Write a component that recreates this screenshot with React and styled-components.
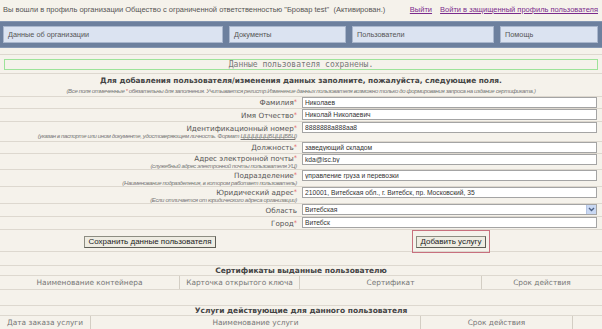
import React from 'react';
import styled, { createGlobalStyle } from 'styled-components';

const GlobalStyle = createGlobalStyle`
	body {
		margin: 0;
		background: #f5f2eb;
		font-family: "DejaVu Sans", Verdana, sans-serif;
	}
`;

const fields = [
	{ label: 'Фамилия', value: 'Николаев', h: 11 },
	{ label: 'Имя Отчество', value: 'Николай Николаевич', h: 12 },
	{
		label: 'Идентификационный номер',
		note: (
			<>
				(указан в паспорте или ином документе, удостоверяющем личность. Формат <u>ЦЦЦЦЦЦЦБЦЦЦББЦ</u>)
			</>
		),
		value: '8888888a888aa8',
		h: 19,
	},
	{ label: 'Должность', value: 'заведующий складом', h: 11 },
	{
		label: 'Адрес электронной почты',
		note: '(служебный адрес электронной почты пользователя УЦ)',
		value: 'kda@isc.by',
		h: 15,
	},
	{
		label: 'Подразделение',
		note: '(Наименование подразделения, в котором работает пользователь)',
		value: 'управление груза и перевозки',
		h: 16,
	},
	{
		label: 'Юридический адрес',
		note: '(Если отличается от юридического адреса организации)',
		value: '210001, Витебская обл., г. Витебск, пр. Московский, 35',
		h: 16,
	},
	{ label: 'Область', value: 'Витебская', select: true, plain: true, h: 12 },
	{ label: 'Город', value: 'Витебск', h: 12 },
];

export default function App() {
	return (
		<Page>
			<GlobalStyle />
			<TopBar>
				<Info>
					Вы вошли в профиль организации Общество с ограниченной ответственностью "Бровар test"&nbsp;&nbsp;(Активирован.)
				</Info>
				<Links>
					<a href="#">Выйти</a>
					<a href="#">Войти в защищенный профиль пользователя</a>
				</Links>
			</TopBar>
			<Nav>
				<Tab $w={220}>Данные об организации</Tab>
				<Tab $w={117}>Документы</Tab>
				<Tab $w={142}>Пользователи</Tab>
				<Tab $w={98}>Помощь</Tab>
			</Nav>
			<Gap />
			<MessageRow>
				<Message>Данные пользователя сохранены.</Message>
			</MessageRow>
			<Intro>
				<Heading>Для добавления пользователя/изменения данных заполните, пожалуйста, следующие поля.</Heading>
				<Note>
					(Все поля отмеченные <Star>*</Star> обязательны для заполнения. Учитывается регистр.Изменение данных
					пользователя возможно только до формирования запроса на издание сертификата.)
				</Note>
			</Intro>
			{fields.map((f) => (
				<FormRow key={f.label} $h={f.h}>
					<LabelCell>
						<Label>
							{f.label}
							{!f.plain && <Star>*</Star>}
						</Label>
						{f.note && <Note $right>{f.note}</Note>}
					</LabelCell>
					<FieldCell>
						{f.select ? (
							<SelectBox>
								<span>{f.value}</span>
								<Arrow>
									<svg width="7" height="5" viewBox="0 0 7 5">
										<path d="M1 1 L3.5 3.5 L6 1" stroke="#4d6185" strokeWidth="1.4" fill="none" />
									</svg>
								</Arrow>
							</SelectBox>
						) : (
							<Input readOnly value={f.value} />
						)}
					</FieldCell>
				</FormRow>
			))}
			<ButtonRow>
				<ButtonCell>
					<Button>Сохранить данные пользователя</Button>
				</ButtonCell>
				<ButtonCell>
					<Marked>
						<Button>Добавить услугу</Button>
					</Marked>
				</ButtonCell>
			</ButtonRow>
			<EmptyRow $h={13} />
			<SectionTitle>Сертификаты выданные пользователю</SectionTitle>
			<HeaderRow $cols="180px 120px 182px 1fr">
				<HeadCell>Наименование контейнера</HeadCell>
				<HeadCell>Карточка открытого ключа</HeadCell>
				<HeadCell>Сертификат</HeadCell>
				<HeadCell $last>Срок действия</HeadCell>
			</HeaderRow>
			<EmptyRow $h={15} />
			<SectionTitle>Услуги действующие для данного пользователя</SectionTitle>
			<HeaderRow $cols="91px 330px 152px 1fr">
				<HeadCell>Дата заказа услуги</HeadCell>
				<HeadCell>Наименование услуги</HeadCell>
				<HeadCell>Срок действия</HeadCell>
				<HeadCell $last />
			</HeaderRow>
			<BottomBar />
		</Page>
	);
}

const Page = styled.div`
	width: 602px;
	overflow: hidden;
`;

const TopBar = styled.div`
	height: 21px;
	display: flex;
	align-items: center;
	justify-content: space-between;
	padding: 0 4px 3px 3px;
	box-sizing: border-box;
	font-family: "Liberation Sans", Arial, sans-serif;
	font-size: 7.5px;
`;

const Info = styled.span`
	color: #555;
	white-space: nowrap;
`;

const Links = styled.div`
	display: flex;
	gap: 8px;
	white-space: nowrap;

	a {
		color: #7b2b8c;
		text-decoration: underline;
	}
`;

const Nav = styled.div`
	height: 27px;
	box-sizing: border-box;
	background: #6d809e;
	border-top: 1px solid #8496b2;
	border-bottom: 1px solid #8496b2;
	padding: 4px 3px;
	display: flex;
	gap: 6px;
`;

const Tab = styled.div`
	width: ${(p) => p.$w}px;
	box-sizing: border-box;
	background: #dbe3f1;
	border: 1px solid #aab7cd;
	display: flex;
	align-items: center;
	padding-left: 4px;
	font-family: "Liberation Sans", Arial, sans-serif;
	font-size: 7.3px;
	color: #555;
`;

const Gap = styled.div`
	height: 6px;
	border-bottom: 1px solid #ddd8cf;
`;

const MessageRow = styled.div`
	padding: 4px 4px 3px;
	border-bottom: 1px solid #ddd8cf;
`;

const Message = styled.div`
	height: 11px;
	box-sizing: border-box;
	border: 1px solid #9ee39a;
	font-family: "DejaVu Sans Mono", monospace;
	font-size: 8px;
	line-height: 9px;
	color: #777;
	text-align: center;
`;

const Intro = styled.div`
	padding: 1px 0;
	text-align: center;
	border-bottom: 1px solid #ddd8cf;
`;

const Heading = styled.div`
	font-weight: bold;
	font-size: 7.4px;
	line-height: 12px;
	color: #444;
`;

const Note = styled.div`
	font-family: "Liberation Sans", Arial, sans-serif;
	font-style: italic;
	font-size: 6px;
	letter-spacing: -0.35px;
	line-height: ${(p) => (p.$right ? '6px' : '8px')};
	color: #777;
	white-space: nowrap;
`;

const Star = styled.span`
	color: #e25b5b;
	font-size: 0.9em;
	vertical-align: top;
`;

const FormRow = styled.div`
	display: grid;
	grid-template-columns: 300px 1fr;
	height: ${(p) => p.$h}px;
	border-bottom: 1px solid #ddd8cf;
`;

const LabelCell = styled.div`
	text-align: right;
	padding-right: 3px;
	display: flex;
	flex-direction: column;
	justify-content: center;
	align-items: flex-end;
`;

const Label = styled.div`
	font-size: 7.2px;
	line-height: 9px;
	color: #555;
	white-space: nowrap;
`;

const FieldCell = styled.div`
	padding: 0 5px 0 2px;
	display: flex;
	align-items: flex-start;
`;

const Input = styled.input`
	width: 100%;
	height: 11px;
	box-sizing: border-box;
	border: 1px solid #a4a4a4;
	background: #fff;
	padding: 0 2px;
	margin: 0;
	font-family: "Liberation Sans", Arial, sans-serif;
	font-size: 6.7px;
	color: #333;
	outline: none;
`;

const SelectBox = styled.div`
	width: 100%;
	height: 11px;
	box-sizing: border-box;
	border: 1px solid #a4a4a4;
	background: #fff;
	display: flex;
	align-items: center;
	justify-content: space-between;
	padding-left: 2px;
	font-family: "Liberation Sans", Arial, sans-serif;
	font-size: 6.7px;
	color: #333;
`;

const Arrow = styled.div`
	width: 9px;
	height: 9px;
	background: #c9d8f3;
	border-left: 1px solid #b5c5e3;
	display: flex;
	align-items: center;
	justify-content: center;
`;

const ButtonRow = styled.div`
	display: grid;
	grid-template-columns: 300px 1fr;
	height: 21px;
	align-items: center;
	border-bottom: 1px solid #ddd8cf;
`;

const ButtonCell = styled.div`
	display: flex;
	justify-content: center;
`;

const Marked = styled.div`
	border: 1px solid #c8707e;
	padding: 5px 3px 4px;
`;

const Button = styled.button`
	display: block;
	height: 12px;
	padding: 0 3px;
	background: #eeece2;
	border: 1px solid #8d8d82;
	border-right-color: #5e5e56;
	border-bottom-color: #5e5e56;
	font-family: "Liberation Sans", Arial, sans-serif;
	font-size: 8px;
	line-height: 10px;
	color: #222;
`;

const EmptyRow = styled.div`
	height: ${(p) => p.$h}px;
	border-bottom: 1px solid #ddd8cf;
`;

const SectionTitle = styled.div`
	text-align: center;
	font-weight: bold;
	font-size: 7.5px;
	line-height: 9px;
	color: #444;
	border-bottom: 1px solid #ddd8cf;
`;

const HeaderRow = styled.div`
	display: grid;
	grid-template-columns: ${(p) => p.$cols};
	height: 13px;
	border-bottom: 1px solid #ddd8cf;
`;

const HeadCell = styled.div`
	border-right: ${(p) => (p.$last ? 'none' : '1px solid #d3cec4')};
	text-align: center;
	font-size: 7.4px;
	line-height: 13px;
	color: #777;
	white-space: nowrap;
`;

const BottomBar = styled.div`
	height: 6px;
	background: #4a4a4a;
`;
